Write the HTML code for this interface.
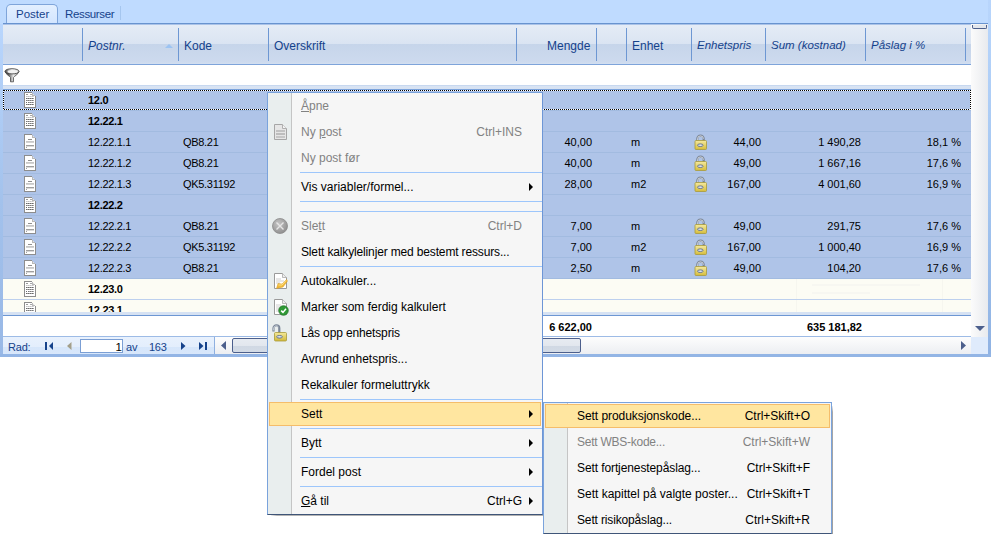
<!DOCTYPE html>
<html><head><meta charset="utf-8">
<style>
*{margin:0;padding:0;box-sizing:border-box}
html,body{width:991px;height:534px;overflow:hidden;background:#fff;font-family:"Liberation Sans",sans-serif;position:relative}
.a{position:absolute}
.t{position:absolute;white-space:pre;line-height:1}
.hd{color:#15428b;font-size:12px}
.hi{font-style:italic}
.cell{font-size:11px;color:#000}
.b{font-weight:bold}
.r{text-align:right}
.row{position:absolute;left:3px;width:968px;height:21px}
.sel{background:#afc4e8}
.sel .sep{background:#a2bbe0}
.cre{background:#fcfcf4}
.cre .sep{background:#bdd0ee}
.sep{position:absolute;left:0;right:0;top:20px;height:1px}
.mi{position:absolute;left:301px;font-size:12px;color:#000;white-space:pre;line-height:1}
.dis{color:#828282}
.sc{position:absolute;font-size:12px;white-space:pre;line-height:1;text-align:right}
.msep{position:absolute;height:1px;background:#9dc6fb}
.arr{position:absolute;width:0;height:0;border-top:4px solid transparent;border-bottom:4px solid transparent;border-left:4.5px solid #000}
u{text-decoration:underline;text-decoration-thickness:1px;text-underline-offset:1px}
</style></head><body>
<!-- outer frame -->
<div class="a" style="left:0;top:0;width:991px;height:357px;background:#bfdbff"></div>
<div class="a" style="left:0;top:24px;width:3px;height:333px;background:linear-gradient(#b9d6fd,#a3c2ec 53%,#98b8e6)"></div>
<div class="a" style="left:988px;top:0;width:3px;height:357px;background:linear-gradient(#b8d5fc,#b6d4fb 7%,#a3c5f0 56%,#8fb2e3)"></div>
<div class="a" style="left:0;top:354px;width:991px;height:3px;background:#93b5e5"></div>

<!-- tabs -->
<div class="a" style="left:6px;top:4px;width:52px;height:20px;border:1px solid #7fa5da;border-bottom:none;border-radius:5px 5px 0 0;background:linear-gradient(#e3efff,#d2e5ff)"></div>
<div class="t" style="left:16px;top:9px;font-size:11.5px;color:#15428b">Poster</div>
<div class="t" style="left:65px;top:9px;font-size:11.5px;color:#15428b;letter-spacing:-.35px">Ressurser</div>
<div class="a" style="left:120px;top:6px;width:1px;height:14px;background:#a5c6ef"></div>

<!-- grid border top -->
<div class="a" style="left:3px;top:23px;width:985px;height:1px;background:#6893cf"></div>
<div class="a" style="left:3px;top:24px;width:968px;height:1px;background:#abc3e8"></div>

<!-- header -->
<div class="a" style="left:3px;top:25px;width:968px;height:19px;background:linear-gradient(#e5ecf6,#dae4f2)"></div>
<div class="a" style="left:3px;top:44px;width:968px;height:20px;background:linear-gradient(#c6d5ea,#cddaee 90%,#d3dff1)"></div>
<div class="a" style="left:3px;top:64px;width:968px;height:1px;background:#7ea4da"></div>
<div class="a" style="left:82px;top:28px;width:1px;height:33px;background:#6d97d3"></div>
<div class="a" style="left:178px;top:28px;width:1px;height:33px;background:#6d97d3"></div>
<div class="a" style="left:268px;top:28px;width:1px;height:33px;background:#6d97d3"></div>
<div class="a" style="left:516px;top:28px;width:1px;height:33px;background:#6d97d3"></div>
<div class="a" style="left:596px;top:28px;width:1px;height:33px;background:#6d97d3"></div>
<div class="a" style="left:626px;top:28px;width:1px;height:33px;background:#6d97d3"></div>
<div class="a" style="left:691px;top:28px;width:1px;height:33px;background:#6d97d3"></div>
<div class="a" style="left:765px;top:28px;width:1px;height:33px;background:#6d97d3"></div>
<div class="a" style="left:865px;top:28px;width:1px;height:33px;background:#6d97d3"></div>
<div class="a" style="left:965px;top:28px;width:1px;height:33px;background:#6d97d3"></div>
<div class="t hd hi" style="left:88px;top:40px">Postnr.</div>
<div class="a" style="left:165px;top:44px;width:0;height:0;border-left:4px solid transparent;border-right:4px solid transparent;border-bottom:4px solid #9cc3f2"></div>
<div class="t hd" style="left:184px;top:40px">Kode</div>
<div class="t hd" style="left:274px;top:40px">Overskrift</div>
<div class="t hd" style="left:547px;top:40px">Mengde</div>
<div class="t hd" style="left:632px;top:40px">Enhet</div>
<div class="t hd hi" style="left:697px;top:40px;font-size:11.5px">Enhetspris</div>
<div class="t hd hi" style="left:771px;top:40px;font-size:11.5px">Sum (kostnad)</div>
<div class="t hd hi" style="left:871px;top:40px;font-size:11.5px">Påslag i %</div>

<!-- vertical scrollbar -->
<div class="a" style="left:971px;top:24px;width:17px;height:313px;background:linear-gradient(90deg,#fbfbfb,#e8eaee)"></div>
<div class="a" style="left:972px;top:25px;width:15px;height:4px;border:1px solid #4c5f8c;border-top:none;border-radius:0 0 2px 2px;background:#e2e6ec"></div>
<div class="a" style="left:975px;top:326px;width:0;height:0;border-left:5px solid transparent;border-right:5px solid transparent;border-top:5px solid #4c5f8c"></div>
<div class="a" style="left:971px;top:337px;width:17px;height:17px;background:#dfebfc"></div>

<!-- filter row -->
<div class="a" style="left:3px;top:65px;width:968px;height:20px;background:#fff"></div>
<div class="a" style="left:3px;top:85px;width:968px;height:1px;background:#c7d8f0"></div>
<div class="a" style="left:3px;top:86px;width:968px;height:3px;background:#d8e3f3"></div>
<div class="a" style="left:3px;top:89px;width:968px;height:1px;background:#7ba3dc"></div>
<svg class="a" style="left:4px;top:67px" width="16" height="16" viewBox="0 0 16 16"><defs><linearGradient id="fg" x1="0" x2="1"><stop offset="0" stop-color="#1e1e1e"/><stop offset=".25" stop-color="#5a5a5a"/><stop offset=".6" stop-color="#e8e8e8"/><stop offset="1" stop-color="#8a8a8a"/></linearGradient><linearGradient id="fr" x1="0" x2="1"><stop offset="0" stop-color="#4a4a4a"/><stop offset=".5" stop-color="#f6f6f6"/><stop offset="1" stop-color="#c8c8c8"/></linearGradient></defs><path d="M1 4.5C1.5 7 6 9.5 6.5 10.5V14.8H9.5V10.5C10 9.5 14.5 7 15 4.5Z" fill="url(#fg)" stroke="#4a4a4a" stroke-width=".8"/><ellipse cx="8" cy="4.3" rx="7" ry="2.6" fill="url(#fr)" stroke="#3c3c3c" stroke-width=".8"/><ellipse cx="8.6" cy="4.6" rx="5" ry="1.5" fill="#f2f2f2"/></svg>

<!-- data rows container (clip to 312) -->
<div class="a" style="left:0;top:90px;width:971px;height:222px;overflow:hidden">
 <div class="row sel" style="top:0px"><div class="sep"></div></div>
<svg class="a" style="left:24px;top:2px" width="12" height="16" shape-rendering="crispEdges"><rect x="0" y="0" width="8" height="1" fill="#8d8d8d"/><rect x="0" y="0" width="1" height="16" fill="#8d8d8d"/><rect x="0" y="15" width="12" height="1" fill="#8d8d8d"/><rect x="11" y="4" width="1" height="12" fill="#8d8d8d"/><rect x="8" y="1" width="1" height="1" fill="#8d8d8d"/><rect x="9" y="2" width="1" height="1" fill="#8d8d8d"/><rect x="10" y="3" width="1" height="1" fill="#8d8d8d"/><rect x="1" y="1" width="7" height="14" fill="#ffffff"/><rect x="8" y="2" width="1" height="13" fill="#ffffff"/><rect x="9" y="3" width="1" height="12" fill="#ffffff"/><rect x="10" y="4" width="1" height="11" fill="#ffffff"/><rect x="8" y="1" width="1" height="3" fill="#b8b8b8"/><rect x="8" y="3" width="3" height="1" fill="#b8b8b8"/><rect x="9" y="2" width="1" height="1" fill="#e0e0e0"/><rect x="2" y="2" width="2" height="1" fill="#9a9a9a"/><rect x="6" y="2" width="2" height="1" fill="#a8a8a8"/><rect x="2" y="4" width="1" height="1" fill="#c4c4c4"/><rect x="3" y="4" width="1" height="1" fill="#d8d8d8"/><rect x="4" y="4" width="1" height="1" fill="#c4c4c4"/><rect x="5" y="4" width="1" height="1" fill="#d8d8d8"/><rect x="6" y="4" width="1" height="1" fill="#c4c4c4"/><rect x="7" y="4" width="1" height="1" fill="#d8d8d8"/><rect x="8" y="4" width="1" height="1" fill="#c4c4c4"/><rect x="9" y="4" width="1" height="1" fill="#d8d8d8"/><rect x="2" y="6" width="1" height="1" fill="#6a6a6a"/><rect x="3" y="6" width="1" height="1" fill="#a0a0a0"/><rect x="4" y="6" width="1" height="1" fill="#6a6a6a"/><rect x="5" y="6" width="1" height="1" fill="#a0a0a0"/><rect x="6" y="6" width="1" height="1" fill="#6a6a6a"/><rect x="7" y="6" width="1" height="1" fill="#a0a0a0"/><rect x="8" y="6" width="1" height="1" fill="#6a6a6a"/><rect x="9" y="6" width="1" height="1" fill="#a0a0a0"/><rect x="2" y="8" width="1" height="1" fill="#7a7a7a"/><rect x="3" y="8" width="1" height="1" fill="#a8a8a8"/><rect x="4" y="8" width="1" height="1" fill="#7a7a7a"/><rect x="5" y="8" width="1" height="1" fill="#a8a8a8"/><rect x="6" y="8" width="1" height="1" fill="#7a7a7a"/><rect x="7" y="8" width="1" height="1" fill="#a8a8a8"/><rect x="8" y="8" width="1" height="1" fill="#7a7a7a"/><rect x="9" y="8" width="1" height="1" fill="#a8a8a8"/><rect x="2" y="10" width="1" height="1" fill="#6a6a6a"/><rect x="4" y="10" width="1" height="1" fill="#7a7a7a"/><rect x="5" y="10" width="1" height="1" fill="#a8a8a8"/><rect x="6" y="10" width="1" height="1" fill="#7a7a7a"/><rect x="7" y="10" width="1" height="1" fill="#a8a8a8"/><rect x="8" y="10" width="1" height="1" fill="#7a7a7a"/><rect x="9" y="10" width="1" height="1" fill="#a8a8a8"/><rect x="2" y="12" width="1" height="1" fill="#6a6a6a"/><rect x="3" y="12" width="1" height="1" fill="#a0a0a0"/><rect x="4" y="12" width="1" height="1" fill="#6a6a6a"/><rect x="5" y="12" width="1" height="1" fill="#a0a0a0"/><rect x="6" y="12" width="1" height="1" fill="#6a6a6a"/><rect x="7" y="12" width="1" height="1" fill="#a0a0a0"/><rect x="8" y="12" width="1" height="1" fill="#6a6a6a"/><rect x="9" y="12" width="1" height="1" fill="#a0a0a0"/></svg>
<div class="t cell b" style="left:88px;top:5px;letter-spacing:-.3px">12.0</div>
<div class="row sel" style="top:21px"><div class="sep"></div></div>
<svg class="a" style="left:24px;top:23px" width="12" height="16" shape-rendering="crispEdges"><rect x="0" y="0" width="8" height="1" fill="#8d8d8d"/><rect x="0" y="0" width="1" height="16" fill="#8d8d8d"/><rect x="0" y="15" width="12" height="1" fill="#8d8d8d"/><rect x="11" y="4" width="1" height="12" fill="#8d8d8d"/><rect x="8" y="1" width="1" height="1" fill="#8d8d8d"/><rect x="9" y="2" width="1" height="1" fill="#8d8d8d"/><rect x="10" y="3" width="1" height="1" fill="#8d8d8d"/><rect x="1" y="1" width="7" height="14" fill="#ffffff"/><rect x="8" y="2" width="1" height="13" fill="#ffffff"/><rect x="9" y="3" width="1" height="12" fill="#ffffff"/><rect x="10" y="4" width="1" height="11" fill="#ffffff"/><rect x="8" y="1" width="1" height="3" fill="#b8b8b8"/><rect x="8" y="3" width="3" height="1" fill="#b8b8b8"/><rect x="9" y="2" width="1" height="1" fill="#e0e0e0"/><rect x="2" y="2" width="2" height="1" fill="#9a9a9a"/><rect x="6" y="2" width="2" height="1" fill="#a8a8a8"/><rect x="2" y="4" width="1" height="1" fill="#c4c4c4"/><rect x="3" y="4" width="1" height="1" fill="#d8d8d8"/><rect x="4" y="4" width="1" height="1" fill="#c4c4c4"/><rect x="5" y="4" width="1" height="1" fill="#d8d8d8"/><rect x="6" y="4" width="1" height="1" fill="#c4c4c4"/><rect x="7" y="4" width="1" height="1" fill="#d8d8d8"/><rect x="8" y="4" width="1" height="1" fill="#c4c4c4"/><rect x="9" y="4" width="1" height="1" fill="#d8d8d8"/><rect x="2" y="6" width="1" height="1" fill="#6a6a6a"/><rect x="3" y="6" width="1" height="1" fill="#a0a0a0"/><rect x="4" y="6" width="1" height="1" fill="#6a6a6a"/><rect x="5" y="6" width="1" height="1" fill="#a0a0a0"/><rect x="6" y="6" width="1" height="1" fill="#6a6a6a"/><rect x="7" y="6" width="1" height="1" fill="#a0a0a0"/><rect x="8" y="6" width="1" height="1" fill="#6a6a6a"/><rect x="9" y="6" width="1" height="1" fill="#a0a0a0"/><rect x="2" y="8" width="1" height="1" fill="#7a7a7a"/><rect x="3" y="8" width="1" height="1" fill="#a8a8a8"/><rect x="4" y="8" width="1" height="1" fill="#7a7a7a"/><rect x="5" y="8" width="1" height="1" fill="#a8a8a8"/><rect x="6" y="8" width="1" height="1" fill="#7a7a7a"/><rect x="7" y="8" width="1" height="1" fill="#a8a8a8"/><rect x="8" y="8" width="1" height="1" fill="#7a7a7a"/><rect x="9" y="8" width="1" height="1" fill="#a8a8a8"/><rect x="2" y="10" width="1" height="1" fill="#6a6a6a"/><rect x="4" y="10" width="1" height="1" fill="#7a7a7a"/><rect x="5" y="10" width="1" height="1" fill="#a8a8a8"/><rect x="6" y="10" width="1" height="1" fill="#7a7a7a"/><rect x="7" y="10" width="1" height="1" fill="#a8a8a8"/><rect x="8" y="10" width="1" height="1" fill="#7a7a7a"/><rect x="9" y="10" width="1" height="1" fill="#a8a8a8"/><rect x="2" y="12" width="1" height="1" fill="#6a6a6a"/><rect x="3" y="12" width="1" height="1" fill="#a0a0a0"/><rect x="4" y="12" width="1" height="1" fill="#6a6a6a"/><rect x="5" y="12" width="1" height="1" fill="#a0a0a0"/><rect x="6" y="12" width="1" height="1" fill="#6a6a6a"/><rect x="7" y="12" width="1" height="1" fill="#a0a0a0"/><rect x="8" y="12" width="1" height="1" fill="#6a6a6a"/><rect x="9" y="12" width="1" height="1" fill="#a0a0a0"/></svg>
<div class="t cell b" style="left:88px;top:26px;letter-spacing:-.3px">12.22.1</div>
<div class="row sel" style="top:42px"><div class="sep"></div></div>
<svg class="a" style="left:24px;top:44px" width="12" height="16" shape-rendering="crispEdges"><rect x="0" y="0" width="8" height="1" fill="#8d8d8d"/><rect x="0" y="0" width="1" height="16" fill="#8d8d8d"/><rect x="0" y="15" width="12" height="1" fill="#8d8d8d"/><rect x="11" y="4" width="1" height="12" fill="#8d8d8d"/><rect x="8" y="1" width="1" height="1" fill="#8d8d8d"/><rect x="9" y="2" width="1" height="1" fill="#8d8d8d"/><rect x="10" y="3" width="1" height="1" fill="#8d8d8d"/><rect x="1" y="1" width="7" height="14" fill="#ffffff"/><rect x="8" y="2" width="1" height="13" fill="#ffffff"/><rect x="9" y="3" width="1" height="12" fill="#ffffff"/><rect x="10" y="4" width="1" height="11" fill="#ffffff"/><rect x="8" y="1" width="1" height="3" fill="#b8b8b8"/><rect x="8" y="3" width="3" height="1" fill="#b8b8b8"/><rect x="9" y="2" width="1" height="1" fill="#e0e0e0"/><rect x="4" y="5" width="4" height="1" fill="#909090"/><rect x="2" y="7" width="8" height="1" fill="#c8c8c8"/><rect x="2" y="8" width="8" height="1" fill="#d4d4d4"/><rect x="2" y="11" width="8" height="1" fill="#a0a0a0"/><rect x="2" y="12" width="8" height="1" fill="#dadada"/><rect x="2" y="13" width="1" height="1" fill="#a0a0a0"/></svg>
<div class="t cell" style="left:88px;top:47px;letter-spacing:-.3px">12.22.1.1</div>
<div class="t cell" style="left:183px;top:47px;letter-spacing:-.3px">QB8.21</div>
<div class="t cell r" style="left:492px;top:47px;width:100px">40,00</div>
<div class="t cell" style="left:631px;top:47px">m</div>
<svg class="a" style="left:694px;top:44px" width="13" height="16" viewBox="0 0 13 16"><defs><linearGradient id="lg2" x1="0" y1="0" x2="0" y2="1"><stop offset="0" stop-color="#f4e9a0"/><stop offset="1" stop-color="#d6bd3c"/></linearGradient></defs><path d="M3.3 7V4.8a3.2 3.2 0 0 1 6.4 0V7" fill="none" stroke="#7d8898" stroke-width="2.2"/><path d="M3.6 6.5V4.8a2.9 2.9 0 0 1 5.8 0" fill="none" stroke="#eef2f6" stroke-width=".7"/><rect x="1" y="6.5" width="11.5" height="9" rx="1" fill="url(#lg2)" stroke="#a89a3a" stroke-width=".8"/><ellipse cx="6.3" cy="11.2" rx="2.8" ry="1.3" fill="#dfe5ee" stroke="#5c6d8c" stroke-width=".9"/></svg>
<div class="t cell r" style="left:661px;top:47px;width:100px">44,00</div>
<div class="t cell r" style="left:761px;top:47px;width:100px">1 490,28</div>
<div class="t cell r" style="left:861px;top:47px;width:100px">18,1 %</div>
<div class="row sel" style="top:63px"><div class="sep"></div></div>
<svg class="a" style="left:24px;top:65px" width="12" height="16" shape-rendering="crispEdges"><rect x="0" y="0" width="8" height="1" fill="#8d8d8d"/><rect x="0" y="0" width="1" height="16" fill="#8d8d8d"/><rect x="0" y="15" width="12" height="1" fill="#8d8d8d"/><rect x="11" y="4" width="1" height="12" fill="#8d8d8d"/><rect x="8" y="1" width="1" height="1" fill="#8d8d8d"/><rect x="9" y="2" width="1" height="1" fill="#8d8d8d"/><rect x="10" y="3" width="1" height="1" fill="#8d8d8d"/><rect x="1" y="1" width="7" height="14" fill="#ffffff"/><rect x="8" y="2" width="1" height="13" fill="#ffffff"/><rect x="9" y="3" width="1" height="12" fill="#ffffff"/><rect x="10" y="4" width="1" height="11" fill="#ffffff"/><rect x="8" y="1" width="1" height="3" fill="#b8b8b8"/><rect x="8" y="3" width="3" height="1" fill="#b8b8b8"/><rect x="9" y="2" width="1" height="1" fill="#e0e0e0"/><rect x="4" y="5" width="4" height="1" fill="#909090"/><rect x="2" y="7" width="8" height="1" fill="#c8c8c8"/><rect x="2" y="8" width="8" height="1" fill="#d4d4d4"/><rect x="2" y="11" width="8" height="1" fill="#a0a0a0"/><rect x="2" y="12" width="8" height="1" fill="#dadada"/><rect x="2" y="13" width="1" height="1" fill="#a0a0a0"/></svg>
<div class="t cell" style="left:88px;top:68px;letter-spacing:-.3px">12.22.1.2</div>
<div class="t cell" style="left:183px;top:68px;letter-spacing:-.3px">QB8.21</div>
<div class="t cell r" style="left:492px;top:68px;width:100px">40,00</div>
<div class="t cell" style="left:631px;top:68px">m</div>
<svg class="a" style="left:694px;top:65px" width="13" height="16" viewBox="0 0 13 16"><defs><linearGradient id="lg3" x1="0" y1="0" x2="0" y2="1"><stop offset="0" stop-color="#f4e9a0"/><stop offset="1" stop-color="#d6bd3c"/></linearGradient></defs><path d="M3.3 7V4.8a3.2 3.2 0 0 1 6.4 0V7" fill="none" stroke="#7d8898" stroke-width="2.2"/><path d="M3.6 6.5V4.8a2.9 2.9 0 0 1 5.8 0" fill="none" stroke="#eef2f6" stroke-width=".7"/><rect x="1" y="6.5" width="11.5" height="9" rx="1" fill="url(#lg3)" stroke="#a89a3a" stroke-width=".8"/><ellipse cx="6.3" cy="11.2" rx="2.8" ry="1.3" fill="#dfe5ee" stroke="#5c6d8c" stroke-width=".9"/></svg>
<div class="t cell r" style="left:661px;top:68px;width:100px">49,00</div>
<div class="t cell r" style="left:761px;top:68px;width:100px">1 667,16</div>
<div class="t cell r" style="left:861px;top:68px;width:100px">17,6 %</div>
<div class="row sel" style="top:84px"><div class="sep"></div></div>
<svg class="a" style="left:24px;top:86px" width="12" height="16" shape-rendering="crispEdges"><rect x="0" y="0" width="8" height="1" fill="#8d8d8d"/><rect x="0" y="0" width="1" height="16" fill="#8d8d8d"/><rect x="0" y="15" width="12" height="1" fill="#8d8d8d"/><rect x="11" y="4" width="1" height="12" fill="#8d8d8d"/><rect x="8" y="1" width="1" height="1" fill="#8d8d8d"/><rect x="9" y="2" width="1" height="1" fill="#8d8d8d"/><rect x="10" y="3" width="1" height="1" fill="#8d8d8d"/><rect x="1" y="1" width="7" height="14" fill="#ffffff"/><rect x="8" y="2" width="1" height="13" fill="#ffffff"/><rect x="9" y="3" width="1" height="12" fill="#ffffff"/><rect x="10" y="4" width="1" height="11" fill="#ffffff"/><rect x="8" y="1" width="1" height="3" fill="#b8b8b8"/><rect x="8" y="3" width="3" height="1" fill="#b8b8b8"/><rect x="9" y="2" width="1" height="1" fill="#e0e0e0"/><rect x="4" y="5" width="4" height="1" fill="#909090"/><rect x="2" y="7" width="8" height="1" fill="#c8c8c8"/><rect x="2" y="8" width="8" height="1" fill="#d4d4d4"/><rect x="2" y="11" width="8" height="1" fill="#a0a0a0"/><rect x="2" y="12" width="8" height="1" fill="#dadada"/><rect x="2" y="13" width="1" height="1" fill="#a0a0a0"/></svg>
<div class="t cell" style="left:88px;top:89px;letter-spacing:-.3px">12.22.1.3</div>
<div class="t cell" style="left:183px;top:89px;letter-spacing:-.3px">QK5.31192</div>
<div class="t cell r" style="left:492px;top:89px;width:100px">28,00</div>
<div class="t cell" style="left:631px;top:89px">m2</div>
<svg class="a" style="left:694px;top:86px" width="13" height="16" viewBox="0 0 13 16"><defs><linearGradient id="lg4" x1="0" y1="0" x2="0" y2="1"><stop offset="0" stop-color="#f4e9a0"/><stop offset="1" stop-color="#d6bd3c"/></linearGradient></defs><path d="M3.3 7V4.8a3.2 3.2 0 0 1 6.4 0V7" fill="none" stroke="#7d8898" stroke-width="2.2"/><path d="M3.6 6.5V4.8a2.9 2.9 0 0 1 5.8 0" fill="none" stroke="#eef2f6" stroke-width=".7"/><rect x="1" y="6.5" width="11.5" height="9" rx="1" fill="url(#lg4)" stroke="#a89a3a" stroke-width=".8"/><ellipse cx="6.3" cy="11.2" rx="2.8" ry="1.3" fill="#dfe5ee" stroke="#5c6d8c" stroke-width=".9"/></svg>
<div class="t cell r" style="left:661px;top:89px;width:100px">167,00</div>
<div class="t cell r" style="left:761px;top:89px;width:100px">4 001,60</div>
<div class="t cell r" style="left:861px;top:89px;width:100px">16,9 %</div>
<div class="row sel" style="top:105px"><div class="sep"></div></div>
<svg class="a" style="left:24px;top:107px" width="12" height="16" shape-rendering="crispEdges"><rect x="0" y="0" width="8" height="1" fill="#8d8d8d"/><rect x="0" y="0" width="1" height="16" fill="#8d8d8d"/><rect x="0" y="15" width="12" height="1" fill="#8d8d8d"/><rect x="11" y="4" width="1" height="12" fill="#8d8d8d"/><rect x="8" y="1" width="1" height="1" fill="#8d8d8d"/><rect x="9" y="2" width="1" height="1" fill="#8d8d8d"/><rect x="10" y="3" width="1" height="1" fill="#8d8d8d"/><rect x="1" y="1" width="7" height="14" fill="#ffffff"/><rect x="8" y="2" width="1" height="13" fill="#ffffff"/><rect x="9" y="3" width="1" height="12" fill="#ffffff"/><rect x="10" y="4" width="1" height="11" fill="#ffffff"/><rect x="8" y="1" width="1" height="3" fill="#b8b8b8"/><rect x="8" y="3" width="3" height="1" fill="#b8b8b8"/><rect x="9" y="2" width="1" height="1" fill="#e0e0e0"/><rect x="2" y="2" width="2" height="1" fill="#9a9a9a"/><rect x="6" y="2" width="2" height="1" fill="#a8a8a8"/><rect x="2" y="4" width="1" height="1" fill="#c4c4c4"/><rect x="3" y="4" width="1" height="1" fill="#d8d8d8"/><rect x="4" y="4" width="1" height="1" fill="#c4c4c4"/><rect x="5" y="4" width="1" height="1" fill="#d8d8d8"/><rect x="6" y="4" width="1" height="1" fill="#c4c4c4"/><rect x="7" y="4" width="1" height="1" fill="#d8d8d8"/><rect x="8" y="4" width="1" height="1" fill="#c4c4c4"/><rect x="9" y="4" width="1" height="1" fill="#d8d8d8"/><rect x="2" y="6" width="1" height="1" fill="#6a6a6a"/><rect x="3" y="6" width="1" height="1" fill="#a0a0a0"/><rect x="4" y="6" width="1" height="1" fill="#6a6a6a"/><rect x="5" y="6" width="1" height="1" fill="#a0a0a0"/><rect x="6" y="6" width="1" height="1" fill="#6a6a6a"/><rect x="7" y="6" width="1" height="1" fill="#a0a0a0"/><rect x="8" y="6" width="1" height="1" fill="#6a6a6a"/><rect x="9" y="6" width="1" height="1" fill="#a0a0a0"/><rect x="2" y="8" width="1" height="1" fill="#7a7a7a"/><rect x="3" y="8" width="1" height="1" fill="#a8a8a8"/><rect x="4" y="8" width="1" height="1" fill="#7a7a7a"/><rect x="5" y="8" width="1" height="1" fill="#a8a8a8"/><rect x="6" y="8" width="1" height="1" fill="#7a7a7a"/><rect x="7" y="8" width="1" height="1" fill="#a8a8a8"/><rect x="8" y="8" width="1" height="1" fill="#7a7a7a"/><rect x="9" y="8" width="1" height="1" fill="#a8a8a8"/><rect x="2" y="10" width="1" height="1" fill="#6a6a6a"/><rect x="4" y="10" width="1" height="1" fill="#7a7a7a"/><rect x="5" y="10" width="1" height="1" fill="#a8a8a8"/><rect x="6" y="10" width="1" height="1" fill="#7a7a7a"/><rect x="7" y="10" width="1" height="1" fill="#a8a8a8"/><rect x="8" y="10" width="1" height="1" fill="#7a7a7a"/><rect x="9" y="10" width="1" height="1" fill="#a8a8a8"/><rect x="2" y="12" width="1" height="1" fill="#6a6a6a"/><rect x="3" y="12" width="1" height="1" fill="#a0a0a0"/><rect x="4" y="12" width="1" height="1" fill="#6a6a6a"/><rect x="5" y="12" width="1" height="1" fill="#a0a0a0"/><rect x="6" y="12" width="1" height="1" fill="#6a6a6a"/><rect x="7" y="12" width="1" height="1" fill="#a0a0a0"/><rect x="8" y="12" width="1" height="1" fill="#6a6a6a"/><rect x="9" y="12" width="1" height="1" fill="#a0a0a0"/></svg>
<div class="t cell b" style="left:88px;top:110px;letter-spacing:-.3px">12.22.2</div>
<div class="row sel" style="top:126px"><div class="sep"></div></div>
<svg class="a" style="left:24px;top:128px" width="12" height="16" shape-rendering="crispEdges"><rect x="0" y="0" width="8" height="1" fill="#8d8d8d"/><rect x="0" y="0" width="1" height="16" fill="#8d8d8d"/><rect x="0" y="15" width="12" height="1" fill="#8d8d8d"/><rect x="11" y="4" width="1" height="12" fill="#8d8d8d"/><rect x="8" y="1" width="1" height="1" fill="#8d8d8d"/><rect x="9" y="2" width="1" height="1" fill="#8d8d8d"/><rect x="10" y="3" width="1" height="1" fill="#8d8d8d"/><rect x="1" y="1" width="7" height="14" fill="#ffffff"/><rect x="8" y="2" width="1" height="13" fill="#ffffff"/><rect x="9" y="3" width="1" height="12" fill="#ffffff"/><rect x="10" y="4" width="1" height="11" fill="#ffffff"/><rect x="8" y="1" width="1" height="3" fill="#b8b8b8"/><rect x="8" y="3" width="3" height="1" fill="#b8b8b8"/><rect x="9" y="2" width="1" height="1" fill="#e0e0e0"/><rect x="4" y="5" width="4" height="1" fill="#909090"/><rect x="2" y="7" width="8" height="1" fill="#c8c8c8"/><rect x="2" y="8" width="8" height="1" fill="#d4d4d4"/><rect x="2" y="11" width="8" height="1" fill="#a0a0a0"/><rect x="2" y="12" width="8" height="1" fill="#dadada"/><rect x="2" y="13" width="1" height="1" fill="#a0a0a0"/></svg>
<div class="t cell" style="left:88px;top:131px;letter-spacing:-.3px">12.22.2.1</div>
<div class="t cell" style="left:183px;top:131px;letter-spacing:-.3px">QB8.21</div>
<div class="t cell r" style="left:492px;top:131px;width:100px">7,00</div>
<div class="t cell" style="left:631px;top:131px">m</div>
<svg class="a" style="left:694px;top:128px" width="13" height="16" viewBox="0 0 13 16"><defs><linearGradient id="lg6" x1="0" y1="0" x2="0" y2="1"><stop offset="0" stop-color="#f4e9a0"/><stop offset="1" stop-color="#d6bd3c"/></linearGradient></defs><path d="M3.3 7V4.8a3.2 3.2 0 0 1 6.4 0V7" fill="none" stroke="#7d8898" stroke-width="2.2"/><path d="M3.6 6.5V4.8a2.9 2.9 0 0 1 5.8 0" fill="none" stroke="#eef2f6" stroke-width=".7"/><rect x="1" y="6.5" width="11.5" height="9" rx="1" fill="url(#lg6)" stroke="#a89a3a" stroke-width=".8"/><ellipse cx="6.3" cy="11.2" rx="2.8" ry="1.3" fill="#dfe5ee" stroke="#5c6d8c" stroke-width=".9"/></svg>
<div class="t cell r" style="left:661px;top:131px;width:100px">49,00</div>
<div class="t cell r" style="left:761px;top:131px;width:100px">291,75</div>
<div class="t cell r" style="left:861px;top:131px;width:100px">17,6 %</div>
<div class="row sel" style="top:147px"><div class="sep"></div></div>
<svg class="a" style="left:24px;top:149px" width="12" height="16" shape-rendering="crispEdges"><rect x="0" y="0" width="8" height="1" fill="#8d8d8d"/><rect x="0" y="0" width="1" height="16" fill="#8d8d8d"/><rect x="0" y="15" width="12" height="1" fill="#8d8d8d"/><rect x="11" y="4" width="1" height="12" fill="#8d8d8d"/><rect x="8" y="1" width="1" height="1" fill="#8d8d8d"/><rect x="9" y="2" width="1" height="1" fill="#8d8d8d"/><rect x="10" y="3" width="1" height="1" fill="#8d8d8d"/><rect x="1" y="1" width="7" height="14" fill="#ffffff"/><rect x="8" y="2" width="1" height="13" fill="#ffffff"/><rect x="9" y="3" width="1" height="12" fill="#ffffff"/><rect x="10" y="4" width="1" height="11" fill="#ffffff"/><rect x="8" y="1" width="1" height="3" fill="#b8b8b8"/><rect x="8" y="3" width="3" height="1" fill="#b8b8b8"/><rect x="9" y="2" width="1" height="1" fill="#e0e0e0"/><rect x="4" y="5" width="4" height="1" fill="#909090"/><rect x="2" y="7" width="8" height="1" fill="#c8c8c8"/><rect x="2" y="8" width="8" height="1" fill="#d4d4d4"/><rect x="2" y="11" width="8" height="1" fill="#a0a0a0"/><rect x="2" y="12" width="8" height="1" fill="#dadada"/><rect x="2" y="13" width="1" height="1" fill="#a0a0a0"/></svg>
<div class="t cell" style="left:88px;top:152px;letter-spacing:-.3px">12.22.2.2</div>
<div class="t cell" style="left:183px;top:152px;letter-spacing:-.3px">QK5.31192</div>
<div class="t cell r" style="left:492px;top:152px;width:100px">7,00</div>
<div class="t cell" style="left:631px;top:152px">m2</div>
<svg class="a" style="left:694px;top:149px" width="13" height="16" viewBox="0 0 13 16"><defs><linearGradient id="lg7" x1="0" y1="0" x2="0" y2="1"><stop offset="0" stop-color="#f4e9a0"/><stop offset="1" stop-color="#d6bd3c"/></linearGradient></defs><path d="M3.3 7V4.8a3.2 3.2 0 0 1 6.4 0V7" fill="none" stroke="#7d8898" stroke-width="2.2"/><path d="M3.6 6.5V4.8a2.9 2.9 0 0 1 5.8 0" fill="none" stroke="#eef2f6" stroke-width=".7"/><rect x="1" y="6.5" width="11.5" height="9" rx="1" fill="url(#lg7)" stroke="#a89a3a" stroke-width=".8"/><ellipse cx="6.3" cy="11.2" rx="2.8" ry="1.3" fill="#dfe5ee" stroke="#5c6d8c" stroke-width=".9"/></svg>
<div class="t cell r" style="left:661px;top:152px;width:100px">167,00</div>
<div class="t cell r" style="left:761px;top:152px;width:100px">1 000,40</div>
<div class="t cell r" style="left:861px;top:152px;width:100px">16,9 %</div>
<div class="row sel" style="top:168px"><div class="sep"></div></div>
<svg class="a" style="left:24px;top:170px" width="12" height="16" shape-rendering="crispEdges"><rect x="0" y="0" width="8" height="1" fill="#8d8d8d"/><rect x="0" y="0" width="1" height="16" fill="#8d8d8d"/><rect x="0" y="15" width="12" height="1" fill="#8d8d8d"/><rect x="11" y="4" width="1" height="12" fill="#8d8d8d"/><rect x="8" y="1" width="1" height="1" fill="#8d8d8d"/><rect x="9" y="2" width="1" height="1" fill="#8d8d8d"/><rect x="10" y="3" width="1" height="1" fill="#8d8d8d"/><rect x="1" y="1" width="7" height="14" fill="#ffffff"/><rect x="8" y="2" width="1" height="13" fill="#ffffff"/><rect x="9" y="3" width="1" height="12" fill="#ffffff"/><rect x="10" y="4" width="1" height="11" fill="#ffffff"/><rect x="8" y="1" width="1" height="3" fill="#b8b8b8"/><rect x="8" y="3" width="3" height="1" fill="#b8b8b8"/><rect x="9" y="2" width="1" height="1" fill="#e0e0e0"/><rect x="4" y="5" width="4" height="1" fill="#909090"/><rect x="2" y="7" width="8" height="1" fill="#c8c8c8"/><rect x="2" y="8" width="8" height="1" fill="#d4d4d4"/><rect x="2" y="11" width="8" height="1" fill="#a0a0a0"/><rect x="2" y="12" width="8" height="1" fill="#dadada"/><rect x="2" y="13" width="1" height="1" fill="#a0a0a0"/></svg>
<div class="t cell" style="left:88px;top:173px;letter-spacing:-.3px">12.22.2.3</div>
<div class="t cell" style="left:183px;top:173px;letter-spacing:-.3px">QB8.21</div>
<div class="t cell r" style="left:492px;top:173px;width:100px">2,50</div>
<div class="t cell" style="left:631px;top:173px">m</div>
<svg class="a" style="left:694px;top:170px" width="13" height="16" viewBox="0 0 13 16"><defs><linearGradient id="lg8" x1="0" y1="0" x2="0" y2="1"><stop offset="0" stop-color="#f4e9a0"/><stop offset="1" stop-color="#d6bd3c"/></linearGradient></defs><path d="M3.3 7V4.8a3.2 3.2 0 0 1 6.4 0V7" fill="none" stroke="#7d8898" stroke-width="2.2"/><path d="M3.6 6.5V4.8a2.9 2.9 0 0 1 5.8 0" fill="none" stroke="#eef2f6" stroke-width=".7"/><rect x="1" y="6.5" width="11.5" height="9" rx="1" fill="url(#lg8)" stroke="#a89a3a" stroke-width=".8"/><ellipse cx="6.3" cy="11.2" rx="2.8" ry="1.3" fill="#dfe5ee" stroke="#5c6d8c" stroke-width=".9"/></svg>
<div class="t cell r" style="left:661px;top:173px;width:100px">49,00</div>
<div class="t cell r" style="left:761px;top:173px;width:100px">104,20</div>
<div class="t cell r" style="left:861px;top:173px;width:100px">17,6 %</div>
<div class="row cre" style="top:189px"><div class="sep"></div></div>
<svg class="a" style="left:24px;top:191px" width="12" height="16" shape-rendering="crispEdges"><rect x="0" y="0" width="8" height="1" fill="#8d8d8d"/><rect x="0" y="0" width="1" height="16" fill="#8d8d8d"/><rect x="0" y="15" width="12" height="1" fill="#8d8d8d"/><rect x="11" y="4" width="1" height="12" fill="#8d8d8d"/><rect x="8" y="1" width="1" height="1" fill="#8d8d8d"/><rect x="9" y="2" width="1" height="1" fill="#8d8d8d"/><rect x="10" y="3" width="1" height="1" fill="#8d8d8d"/><rect x="1" y="1" width="7" height="14" fill="#ffffff"/><rect x="8" y="2" width="1" height="13" fill="#ffffff"/><rect x="9" y="3" width="1" height="12" fill="#ffffff"/><rect x="10" y="4" width="1" height="11" fill="#ffffff"/><rect x="8" y="1" width="1" height="3" fill="#b8b8b8"/><rect x="8" y="3" width="3" height="1" fill="#b8b8b8"/><rect x="9" y="2" width="1" height="1" fill="#e0e0e0"/><rect x="2" y="2" width="2" height="1" fill="#9a9a9a"/><rect x="6" y="2" width="2" height="1" fill="#a8a8a8"/><rect x="2" y="4" width="1" height="1" fill="#c4c4c4"/><rect x="3" y="4" width="1" height="1" fill="#d8d8d8"/><rect x="4" y="4" width="1" height="1" fill="#c4c4c4"/><rect x="5" y="4" width="1" height="1" fill="#d8d8d8"/><rect x="6" y="4" width="1" height="1" fill="#c4c4c4"/><rect x="7" y="4" width="1" height="1" fill="#d8d8d8"/><rect x="8" y="4" width="1" height="1" fill="#c4c4c4"/><rect x="9" y="4" width="1" height="1" fill="#d8d8d8"/><rect x="2" y="6" width="1" height="1" fill="#6a6a6a"/><rect x="3" y="6" width="1" height="1" fill="#a0a0a0"/><rect x="4" y="6" width="1" height="1" fill="#6a6a6a"/><rect x="5" y="6" width="1" height="1" fill="#a0a0a0"/><rect x="6" y="6" width="1" height="1" fill="#6a6a6a"/><rect x="7" y="6" width="1" height="1" fill="#a0a0a0"/><rect x="8" y="6" width="1" height="1" fill="#6a6a6a"/><rect x="9" y="6" width="1" height="1" fill="#a0a0a0"/><rect x="2" y="8" width="1" height="1" fill="#7a7a7a"/><rect x="3" y="8" width="1" height="1" fill="#a8a8a8"/><rect x="4" y="8" width="1" height="1" fill="#7a7a7a"/><rect x="5" y="8" width="1" height="1" fill="#a8a8a8"/><rect x="6" y="8" width="1" height="1" fill="#7a7a7a"/><rect x="7" y="8" width="1" height="1" fill="#a8a8a8"/><rect x="8" y="8" width="1" height="1" fill="#7a7a7a"/><rect x="9" y="8" width="1" height="1" fill="#a8a8a8"/><rect x="2" y="10" width="1" height="1" fill="#6a6a6a"/><rect x="4" y="10" width="1" height="1" fill="#7a7a7a"/><rect x="5" y="10" width="1" height="1" fill="#a8a8a8"/><rect x="6" y="10" width="1" height="1" fill="#7a7a7a"/><rect x="7" y="10" width="1" height="1" fill="#a8a8a8"/><rect x="8" y="10" width="1" height="1" fill="#7a7a7a"/><rect x="9" y="10" width="1" height="1" fill="#a8a8a8"/><rect x="2" y="12" width="1" height="1" fill="#6a6a6a"/><rect x="3" y="12" width="1" height="1" fill="#a0a0a0"/><rect x="4" y="12" width="1" height="1" fill="#6a6a6a"/><rect x="5" y="12" width="1" height="1" fill="#a0a0a0"/><rect x="6" y="12" width="1" height="1" fill="#6a6a6a"/><rect x="7" y="12" width="1" height="1" fill="#a0a0a0"/><rect x="8" y="12" width="1" height="1" fill="#6a6a6a"/><rect x="9" y="12" width="1" height="1" fill="#a0a0a0"/></svg>
<div class="t cell b" style="left:88px;top:194px;letter-spacing:-.3px">12.23.0</div>
<div class="row cre" style="top:210px"><div class="sep"></div></div>
<svg class="a" style="left:24px;top:212px" width="12" height="16" shape-rendering="crispEdges"><rect x="0" y="0" width="8" height="1" fill="#8d8d8d"/><rect x="0" y="0" width="1" height="16" fill="#8d8d8d"/><rect x="0" y="15" width="12" height="1" fill="#8d8d8d"/><rect x="11" y="4" width="1" height="12" fill="#8d8d8d"/><rect x="8" y="1" width="1" height="1" fill="#8d8d8d"/><rect x="9" y="2" width="1" height="1" fill="#8d8d8d"/><rect x="10" y="3" width="1" height="1" fill="#8d8d8d"/><rect x="1" y="1" width="7" height="14" fill="#ffffff"/><rect x="8" y="2" width="1" height="13" fill="#ffffff"/><rect x="9" y="3" width="1" height="12" fill="#ffffff"/><rect x="10" y="4" width="1" height="11" fill="#ffffff"/><rect x="8" y="1" width="1" height="3" fill="#b8b8b8"/><rect x="8" y="3" width="3" height="1" fill="#b8b8b8"/><rect x="9" y="2" width="1" height="1" fill="#e0e0e0"/><rect x="2" y="2" width="2" height="1" fill="#9a9a9a"/><rect x="6" y="2" width="2" height="1" fill="#a8a8a8"/><rect x="2" y="4" width="1" height="1" fill="#c4c4c4"/><rect x="3" y="4" width="1" height="1" fill="#d8d8d8"/><rect x="4" y="4" width="1" height="1" fill="#c4c4c4"/><rect x="5" y="4" width="1" height="1" fill="#d8d8d8"/><rect x="6" y="4" width="1" height="1" fill="#c4c4c4"/><rect x="7" y="4" width="1" height="1" fill="#d8d8d8"/><rect x="8" y="4" width="1" height="1" fill="#c4c4c4"/><rect x="9" y="4" width="1" height="1" fill="#d8d8d8"/><rect x="2" y="6" width="1" height="1" fill="#6a6a6a"/><rect x="3" y="6" width="1" height="1" fill="#a0a0a0"/><rect x="4" y="6" width="1" height="1" fill="#6a6a6a"/><rect x="5" y="6" width="1" height="1" fill="#a0a0a0"/><rect x="6" y="6" width="1" height="1" fill="#6a6a6a"/><rect x="7" y="6" width="1" height="1" fill="#a0a0a0"/><rect x="8" y="6" width="1" height="1" fill="#6a6a6a"/><rect x="9" y="6" width="1" height="1" fill="#a0a0a0"/><rect x="2" y="8" width="1" height="1" fill="#7a7a7a"/><rect x="3" y="8" width="1" height="1" fill="#a8a8a8"/><rect x="4" y="8" width="1" height="1" fill="#7a7a7a"/><rect x="5" y="8" width="1" height="1" fill="#a8a8a8"/><rect x="6" y="8" width="1" height="1" fill="#7a7a7a"/><rect x="7" y="8" width="1" height="1" fill="#a8a8a8"/><rect x="8" y="8" width="1" height="1" fill="#7a7a7a"/><rect x="9" y="8" width="1" height="1" fill="#a8a8a8"/><rect x="2" y="10" width="1" height="1" fill="#6a6a6a"/><rect x="4" y="10" width="1" height="1" fill="#7a7a7a"/><rect x="5" y="10" width="1" height="1" fill="#a8a8a8"/><rect x="6" y="10" width="1" height="1" fill="#7a7a7a"/><rect x="7" y="10" width="1" height="1" fill="#a8a8a8"/><rect x="8" y="10" width="1" height="1" fill="#7a7a7a"/><rect x="9" y="10" width="1" height="1" fill="#a8a8a8"/><rect x="2" y="12" width="1" height="1" fill="#6a6a6a"/><rect x="3" y="12" width="1" height="1" fill="#a0a0a0"/><rect x="4" y="12" width="1" height="1" fill="#6a6a6a"/><rect x="5" y="12" width="1" height="1" fill="#a0a0a0"/><rect x="6" y="12" width="1" height="1" fill="#6a6a6a"/><rect x="7" y="12" width="1" height="1" fill="#a0a0a0"/><rect x="8" y="12" width="1" height="1" fill="#6a6a6a"/><rect x="9" y="12" width="1" height="1" fill="#a0a0a0"/></svg>
<div class="t cell b" style="left:88px;top:215px;letter-spacing:-.3px">12.23.1</div>
<div class="a" style="left:3px;top:0;width:968px;height:1px;background:repeating-linear-gradient(90deg,#fff 0 1px,#000 1px 2px)"></div><div class="a" style="left:3px;top:19px;width:968px;height:1px;background:repeating-linear-gradient(90deg,#fff 0 1px,#000 1px 2px)"></div><div class="a" style="left:3px;top:0;width:1px;height:20px;background:repeating-linear-gradient(#000 0 1px,#fff 1px 2px)"></div><div class="a" style="left:970px;top:0;width:1px;height:20px;background:repeating-linear-gradient(#000 0 1px,#fff 1px 2px)"></div>
</div>
<div class="a" style="left:796px;top:279px;width:1px;height:20px;background:#f6f6ef"></div><div class="a" style="left:796px;top:300px;width:1px;height:12px;background:#f6f6ef"></div>
<div class="a" style="left:942px;top:279px;width:1px;height:20px;background:#f6f6ef"></div><div class="a" style="left:942px;top:300px;width:1px;height:12px;background:#f6f6ef"></div>
<div class="a" style="left:812px;top:284px;width:108px;height:2px;background:#f7f7f1"></div>
<div class="a" style="left:812px;top:292px;width:58px;height:2px;background:#f7f7f1"></div>
<div class="a" style="left:3px;top:312px;width:968px;height:3px;background:#d6e2f3"></div>
<div class="a" style="left:3px;top:315px;width:968px;height:1px;background:#6d97d3"></div>

<!-- footer -->
<div class="a" style="left:3px;top:316px;width:968px;height:20px;background:#fff"></div>
<div class="a" style="left:3px;top:336px;width:968px;height:1px;background:#9dbbe6"></div>
<div class="t cell b r" style="left:492px;top:322px;width:100px">6 622,00</div>
<div class="t cell b r" style="left:762px;top:322px;width:100px">635 181,82</div>

<!-- navigator -->
<div class="a" style="left:3px;top:337px;width:212px;height:17px;background:linear-gradient(#e8f1fd 0,#e3eefc 10px,#d6e6fa 10px,#d8e7fb)"></div>
<div class="t" style="left:8px;top:342px;font-size:11px;color:#15428b;letter-spacing:-.2px">Rad:</div>

<!-- nav buttons -->
<svg class="a" style="left:45px;top:342px" width="9" height="8" shape-rendering="crispEdges"><rect x="0" y="0" width="2" height="8" fill="#15428b"/><path d="M8 0V8L4 4Z" fill="#15428b" shape-rendering="auto"/></svg>
<svg class="a" style="left:67px;top:342px" width="5" height="8"><path d="M4.5 0V8L0 4Z" fill="#a39f8a"/></svg>
<div class="a" style="left:80px;top:339px;width:43px;height:14px;border:1px solid #7b9fd4;background:#fff"></div>
<div class="t" style="left:81px;top:342px;width:41px;text-align:right;font-size:11.5px;color:#000">1</div>
<div class="t" style="left:126px;top:342px;font-size:11px;color:#15428b">av</div>
<div class="t" style="left:149px;top:342px;font-size:11px;color:#15428b;letter-spacing:-.3px">163</div>
<svg class="a" style="left:181px;top:342px" width="5" height="8"><path d="M0 0V8L4.5 4Z" fill="#15428b"/></svg>
<svg class="a" style="left:199px;top:342px" width="9" height="8" shape-rendering="crispEdges"><path d="M0 0V8L4.5 4Z" fill="#15428b" shape-rendering="auto"/><rect x="6" y="0" width="2" height="8" fill="#15428b"/></svg>
<div class="a" style="left:214px;top:337px;width:1px;height:17px;background:#8fb0e0"></div>
<!-- hscroll -->
<div class="a" style="left:215px;top:337px;width:756px;height:17px;background:linear-gradient(#fdfdfd,#eceef2)"></div>
<svg class="a" style="left:221px;top:341px" width="5" height="9" viewBox="0 0 5 9"><path d="M5 0V9L0 4.5Z" fill="#4c5f8c"/></svg>
<div class="a" style="left:232px;top:338px;width:349px;height:15px;border:1px solid #4c5f8c;border-radius:2px;background:linear-gradient(#e7ebf1 0,#e2e7ee 7px,#d0d8e3 7px,#d3dbe6)"></div>
<svg class="a" style="left:961px;top:341px" width="5" height="9" viewBox="0 0 5 9"><path d="M0 0V9L5 4.5Z" fill="#4c5f8c"/></svg>

<!-- context menu -->
<div class="a" style="left:267px;top:92px;width:276px;height:423px;background:#f6f6f6;border:1px solid #7aa3dc;border-right-color:#6d96d6;border-bottom-color:#3f5578"></div><div class="a" style="left:271px;top:515px;width:272px;height:1px;background:linear-gradient(90deg,#f0f0f0,#b4b4b4 6px,#b0b0b0)"></div>
<div class="a" style="left:268px;top:93px;width:23px;height:421px;background:#e9eeee"></div>
<div class="a" style="left:291px;top:93px;width:1px;height:421px;background:#c5c5c5"></div>
<div class="msep" style="left:300px;top:172px;width:242px"></div>
<div class="msep" style="left:300px;top:201px;width:242px"></div>
<div class="msep" style="left:300px;top:211px;width:242px"></div>
<div class="msep" style="left:300px;top:266px;width:242px"></div>
<div class="msep" style="left:300px;top:399px;width:242px"></div>
<div class="msep" style="left:300px;top:428px;width:242px"></div>
<div class="msep" style="left:300px;top:457px;width:242px"></div>
<div class="msep" style="left:300px;top:486px;width:242px"></div>
<div class="a" style="left:269px;top:402px;width:272px;height:24px;background:#ffe6a0;border:1px solid #f5bd6a"></div>
<div class="mi dis" style="top:100px"><u>Å</u>pne</div>
<div class="mi dis" style="top:126px">Ny <u>p</u>ost</div>
<div class="sc dis" style="left:422px;width:100px;top:126px">Ctrl+INS</div>
<div class="mi dis" style="top:152px">Ny post før</div>
<div class="mi" style="top:181px">Vis variabler/formel...</div>
<div class="arr" style="left:529px;top:183px"></div>
<div class="mi dis" style="top:220px">Sle<u>t</u>t</div>
<div class="sc dis" style="left:422px;width:100px;top:220px">Ctrl+D</div>
<div class="mi" style="top:246px;letter-spacing:-.15px">Slett kalkylelinjer med bestemt ressurs...</div>
<div class="mi" style="top:275px">Autokalkuler...</div>
<div class="mi" style="top:301px">Marker som ferdig kalkulert</div>
<div class="mi" style="top:327px;letter-spacing:-.14px">Lås opp enhetspris</div>
<div class="mi" style="top:353px">Avrund enhetspris...</div>
<div class="mi" style="top:379px">Rekalkuler formeluttrykk</div>
<div class="mi" style="top:408px">Sett</div>
<div class="arr" style="left:529px;top:410px"></div>
<div class="mi" style="top:437px">Bytt</div>
<div class="arr" style="left:529px;top:439px"></div>
<div class="mi" style="top:466px">Fordel post</div>
<div class="arr" style="left:529px;top:468px"></div>
<div class="mi" style="top:495px"><u>G</u>å til</div>
<div class="sc" style="left:422px;width:100px;top:495px">Ctrl+G</div>
<div class="arr" style="left:529px;top:497px"></div>
<svg class="a" style="left:274px;top:124px" width="13" height="16" shape-rendering="crispEdges"><path d="M.5 .5H8.5L12.5 4.5V15.5H.5Z" fill="#e6e6e6" stroke="#a6a6a6" shape-rendering="auto"/><path d="M8.5 .5V4.5H12.5" fill="#f4f4f4" stroke="#b0b0b0" shape-rendering="auto"/><rect x="2" y="6" width="9" height="2" fill="#c2c2c2"/><rect x="2" y="9" width="9" height="2" fill="#bdbdbd"/><rect x="2" y="12" width="9" height="2" fill="#c6c6c6"/></svg>
<svg class="a" style="left:272px;top:218px" width="16" height="16" viewBox="0 0 16 16"><defs><radialGradient id="sg" cx=".4" cy=".35" r=".7"><stop offset="0" stop-color="#c4c4c4"/><stop offset="1" stop-color="#8e8e8e"/></radialGradient></defs><circle cx="8" cy="8" r="7.5" fill="url(#sg)" stroke="#8a8a8a" stroke-width=".8"/><path d="M4.5 4.5L11.5 11.5M11.5 4.5L4.5 11.5" stroke="#e6e6e6" stroke-width="1.4"/></svg>
<svg class="a" style="left:274px;top:273px" width="14" height="17" viewBox="0 0 14 17"><path d="M.5 .5H8.5L12.5 4.5V15.5H.5Z" fill="#fff" stroke="#9a9a9a"/><path d="M8.5 .5V4.5H12.5" fill="#eee" stroke="#aaa" stroke-width=".8"/><path d="M2 6h5M2 8h8M2 10h4" stroke="#cfcfcf"/><path d="M2.5 15.5L4 10.5L8 11L12.5 6.5L13.5 8L9 14Z" fill="#f0bb3c" stroke="#d89a20" stroke-width=".5"/><path d="M4.5 12L8 12L12 7.5" fill="none" stroke="#fbe08a" stroke-width="1"/></svg>
<svg class="a" style="left:274px;top:299px" width="15" height="17" viewBox="0 0 15 17"><path d="M.5 .5H8.5L12.5 4.5V15.5H.5Z" fill="#fff" stroke="#9a9a9a"/><path d="M8.5 .5V4.5H12.5" fill="#eee" stroke="#aaa" stroke-width=".8"/><path d="M2 6h5M2 8h8M2 10h4M2 12h3" stroke="#cfcfcf"/><circle cx="9.5" cy="11.5" r="4.8" fill="#2f9a36" stroke="#1e6e24" stroke-width=".7"/><path d="M7.2 11.6L9 13.4L12 9.8" fill="none" stroke="#fff" stroke-width="1.5"/></svg>
<svg class="a" style="left:271px;top:324px" width="17" height="18" viewBox="0 0 17 18"><path d="M2.5 7.5V4.3a2.9 2.9 0 0 1 5.8 0V9" fill="none" stroke="#7b8798" stroke-width="2.2"/><path d="M2.7 6.5V4.3a2.6 2.6 0 0 1 4.8-1.2" fill="none" stroke="#eef2f6" stroke-width=".7"/><defs><linearGradient id="ol" x1="0" y1="0" x2="0" y2="1"><stop offset="0" stop-color="#f4ea9c"/><stop offset="1" stop-color="#d2b938"/></linearGradient></defs><rect x="3.5" y="8.5" width="12" height="8.5" rx="1" fill="url(#ol)" stroke="#a89a3a" stroke-width=".8"/><ellipse cx="8.5" cy="12.8" rx="2.9" ry="1.3" fill="#dfe5ee" stroke="#5c6d8c" stroke-width=".9"/></svg>
<!-- submenu -->
<div class="a" style="left:543px;top:402px;width:289px;height:132px;background:#f6f6f6;border:1px solid #7aa3dc;border-bottom-color:#3f5578"></div><div class="a" style="left:832px;top:406px;width:1px;height:128px;background:linear-gradient(#f0f0f0,#a8a8a8 6px,#a0a0a0)"></div>
<div class="a" style="left:544px;top:403px;width:23px;height:130px;background:#e9eeee"></div>
<div class="a" style="left:567px;top:403px;width:1px;height:130px;background:#c5c5c5"></div>
<div class="a" style="left:545px;top:404px;width:285px;height:24px;background:#ffe6a0;border:1px solid #f5bd6a"></div>
<div class="mi" style="left:577px;top:410px;letter-spacing:-.06px">Sett produksjonskode...</div>
<div class="sc" style="left:710px;width:100px;top:410px">Ctrl+Skift+O</div>
<div class="mi dis" style="left:577px;top:436px;letter-spacing:-.25px">Sett WBS-kode...</div>
<div class="sc dis" style="left:710px;width:100px;top:436px">Ctrl+Skift+W</div>
<div class="mi" style="left:577px;top:462px;letter-spacing:-.1px">Sett fortjenestepåslag...</div>
<div class="sc" style="left:710px;width:100px;top:462px">Ctrl+Skift+F</div>
<div class="mi" style="left:577px;top:488px">Sett kapittel på valgte poster...</div>
<div class="sc" style="left:710px;width:100px;top:488px">Ctrl+Skift+T</div>
<div class="mi" style="left:577px;top:514px;letter-spacing:-.15px">Sett risikopåslag...</div>
<div class="sc" style="left:710px;width:100px;top:514px">Ctrl+Skift+R</div>
</body></html>
